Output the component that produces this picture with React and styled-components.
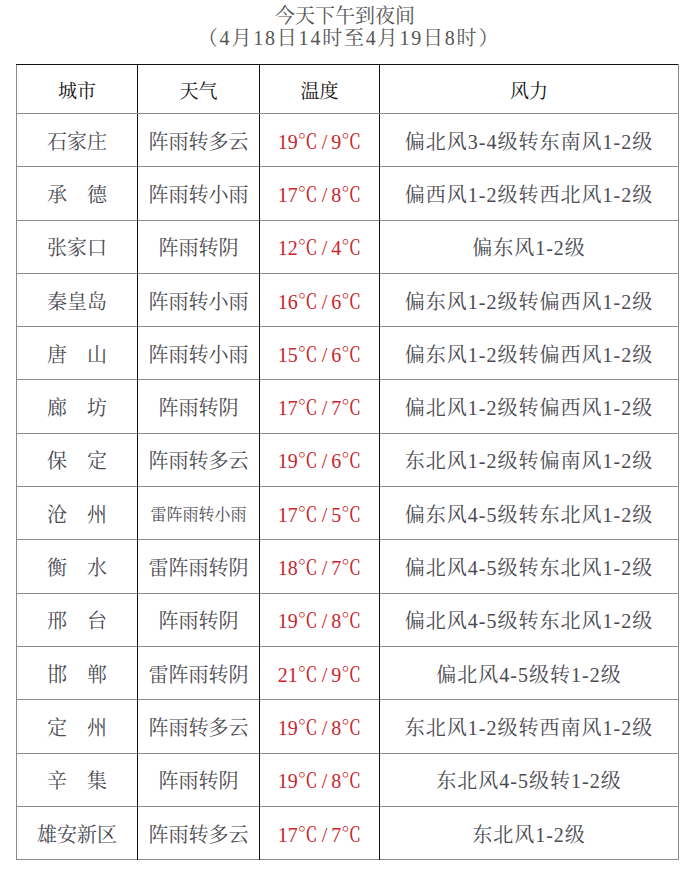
import React from "react";
import styled, {createGlobalStyle} from "styled-components";

const GlobalStyle = createGlobalStyle`
  body {
    margin: 0;
    background: #ffffff;
    font-family: "Liberation Serif", "Noto Serif CJK SC", "Noto Sans CJK SC", serif;
  }
`;

const Page = styled.div`
  width: 690px;
  height: 892px;
  padding-top: 5px;
  box-sizing: border-box;
`;

const Title = styled.h1`
  margin: 0;
  text-align: center;
  font-weight: normal;
  font-size: 20px;
  line-height: 22px;
  color: #555555;
`;

const Period = styled.span`
  letter-spacing: 1.8px;
  padding-left: 8px;
`;

const Table = styled.table`
  margin: 15px 0 0 16px;
  border-collapse: collapse;
  table-layout: fixed;
  width: 662px;
  border-top: 1px solid #111111;
  border-left: 1px solid #8a8a8a;
  border-right: 1px solid #8a8a8a;
  border-bottom: 1px solid #8a8a8a;
`;

const Col = styled.col`
  width: ${p => p.$w}px;
`;

const Th = styled.th`
  height: 48px;
  padding: 0;
  font-weight: normal;
  font-size: 19px;
  color: #111111;
  text-align: center;
  border-bottom: 1px solid #8a8a8a;
  border-left: 1px solid #111111;
  &:first-child {
    border-left: none;
  }
`;

const Td = styled.td`
  height: 52.3px;
  padding: 0;
  font-size: ${p => (p.$small ? 16 : 20)}px;
  color: ${p => (p.$red ? "#c9252d" : "#4a4a52")};
  letter-spacing: ${p => (p.$spaced ? 1 : 0)}px;
  text-align: center;
  white-space: nowrap;
  border-top: 1px solid #8a8a8a;
  border-left: 1px solid #111111;
  &:first-child {
    border-left: none;
  }
`;

const Slash = styled.span`
  margin: 0 4px;
`;

const rows = [
  ["石家庄", "阵雨转多云", [19, 9], "偏北风3-4级转东南风1-2级"],
  ["承　德", "阵雨转小雨", [17, 8], "偏西风1-2级转西北风1-2级"],
  ["张家口", "阵雨转阴", [12, 4], "偏东风1-2级"],
  ["秦皇岛", "阵雨转小雨", [16, 6], "偏东风1-2级转偏西风1-2级"],
  ["唐　山", "阵雨转小雨", [15, 6], "偏东风1-2级转偏西风1-2级"],
  ["廊　坊", "阵雨转阴", [17, 7], "偏北风1-2级转偏西风1-2级"],
  ["保　定", "阵雨转多云", [19, 6], "东北风1-2级转偏南风1-2级"],
  ["沧　州", "雷阵雨转小雨", [17, 5], "偏东风4-5级转东北风1-2级", true],
  ["衡　水", "雷阵雨转阴", [18, 7], "偏北风4-5级转东北风1-2级"],
  ["邢　台", "阵雨转阴", [19, 8], "偏北风4-5级转东北风1-2级"],
  ["邯　郸", "雷阵雨转阴", [21, 9], "偏北风4-5级转1-2级"],
  ["定　州", "阵雨转多云", [19, 8], "东北风1-2级转西南风1-2级"],
  ["辛　集", "阵雨转阴", [19, 8], "东北风4-5级转1-2级"],
  ["雄安新区", "阵雨转多云", [17, 7], "东北风1-2级"],
];

export default function App() {
  return (
    <Page>
      <GlobalStyle />
      <Title>
        今天下午到夜间
        <br />
        <Period>（4月18日14时至4月19日8时）</Period>
      </Title>
      <Table>
        <colgroup>
          <Col $w={121} />
          <Col $w={122} />
          <Col $w={120} />
          <Col $w={299} />
        </colgroup>
        <thead>
          <tr>
            <Th>城市</Th>
            <Th>天气</Th>
            <Th>温度</Th>
            <Th>风力</Th>
          </tr>
        </thead>
        <tbody>
          {rows.map(([city, weather, [hi, lo], wind, small]) => (
            <tr key={city}>
              <Td>{city}</Td>
              <Td $small={small}>{weather}</Td>
              <Td $red>
                {hi}℃<Slash>/</Slash>{lo}℃
              </Td>
              <Td $spaced>{wind}</Td>
            </tr>
          ))}
        </tbody>
      </Table>
    </Page>
  );
}
